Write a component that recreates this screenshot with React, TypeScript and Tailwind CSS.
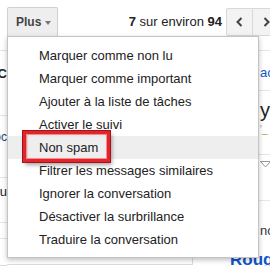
const menuItems = [
  "Marquer comme non lu",
  "Marquer comme important",
  "Ajouter à la liste de tâches",
  "Activer le suivi",
  "Non spam",
  "Filtrer les messages similaires",
  "Ignorer la conversation",
  "Désactiver la surbrillance",
  "Traduire la conversation",
];

function Chevron({ dir }: { dir: "left" | "right" }) {
  return (
    <svg width="7" height="10" viewBox="0 0 7 10" fill="none">
      <polyline
        points={dir === "left" ? "5.5,1 1.5,5 5.5,9" : "1.5,1 5.5,5 1.5,9"}
        stroke="#444"
        strokeWidth="2"
      />
    </svg>
  );
}

export default function App() {
  return (
    <div className="relative w-[270px] h-[266px] overflow-hidden bg-white font-['Liberation_Sans',Arial,sans-serif] text-[13px] text-[#222]">
      {/* Toolbar */}
      <div className="flex items-start h-[36px] pt-[7px] pl-[7px]">
        <button className="flex items-center h-[29px] w-[51px] pl-[8px] gap-[4px] rounded-t-[2px] border border-b-0 border-[#d0d0d0] bg-[#eeeeee] text-[12px] font-bold text-[#444]">
          Plus
          <span className="w-0 h-0 border-x-[3px] border-x-transparent border-t-[4px] border-t-[#777] mt-[1px]" />
        </button>
        <div className="ml-auto mr-[4px] h-[29px] flex items-center whitespace-nowrap">
          <b>7</b>&nbsp;sur environ&nbsp;<b>94</b>
        </div>
        <div className="flex mr-[-10px] mt-[1px]">
          <button className="w-[27px] h-[28px] flex items-center justify-center border border-[#d8d8d8] rounded-l-[2px] bg-[#f3f3f3]">
            <Chevron dir="left" />
          </button>
          <button className="w-[27px] h-[28px] flex items-center justify-center border border-l-0 border-[#d8d8d8] bg-[#f3f3f3]">
            <Chevron dir="right" />
          </button>
        </div>
      </div>

      {/* Page behind the menu */}
      <div className="flex h-[230px]">
        <div className="w-[7px] shrink-0 flex flex-col overflow-hidden">
          <div className="h-[15px] shrink-0 border-b border-[#e5e5e5]" />
          <div className="h-[65px] shrink-0 border-b border-[#e5e5e5] pt-[15px] leading-[16px] font-bold flex justify-end whitespace-nowrap">
            C
          </div>
          <div className="h-[62px] shrink-0 border-b border-[#e5e5e5] pt-[13px] leading-[16px] text-[12px] text-[#2a3f6a] flex justify-end whitespace-nowrap">
            oc
          </div>
          <div className="h-[45px] shrink-0 border-b border-[#e5e5e5] pt-[6px] leading-[16px] flex justify-end whitespace-nowrap">
            u
          </div>
          <div className="h-[16px] shrink-0 border-b border-[#e5e5e5]" />
          <div className="h-[27px] shrink-0 border-b border-[#dcdcdc]" />
        </div>

        <div className="flex-1 flex flex-col pt-[221px]">
          <div className="h-[8px] w-[186px] border-r border-b border-[#dcdcdc]" />
        </div>

        <div className="w-[11px] shrink-0 flex flex-col pl-[1px]">
          <div className="h-[15px] shrink-0 border-b border-[#e5e5e5] -ml-[1px]" />
          <div className="h-[40px] shrink-0 border-b border-[#e5e5e5] pt-[14px] leading-[16px] text-[#1155cc] whitespace-nowrap overflow-hidden -ml-[1px] pl-[1px]">
            ac
          </div>
          <div className="h-[64px] shrink-0 border-b border-[#e5e5e5] overflow-hidden -ml-[1px] pl-[1px]">
            <div className="pt-[8px] leading-[22px] text-[20px] text-[#222]">y</div>
            <div className="mt-[4px] text-[10px] leading-[10px] text-[#b59a4a] whitespace-nowrap">'_</div>
          </div>
          <div className="h-[46px] shrink-0 border-b border-[#e5e5e5] pt-[6px] -ml-[1px] pl-[1px]">
            <svg width="11" height="7" viewBox="0 0 11 7">
              <polygon points="0.5,0.5 10.5,0.5 5.5,6" fill="white" stroke="#999" />
            </svg>
          </div>
          <div className="h-[44px] shrink-0 pt-[22px] leading-[16px] text-[#333] whitespace-nowrap overflow-hidden">
            nc
          </div>
          <div className="mt-[5px] -ml-[30px] text-[17px] leading-[20px] font-bold text-[#1155cc] whitespace-nowrap">
            Rouge
          </div>
        </div>
      </div>

      {/* Dropdown menu */}
      <div className="absolute left-[7px] top-[36px] w-[252px] h-[222px] bg-white border border-[#c4c4c4] shadow-[0_2px_5px_rgba(0,0,0,0.25)] pt-[7px]">
        {menuItems.map((label, i) => (
          <div
            key={label}
            className={
              i === 4
                ? "relative h-[23px] flex items-center pl-[31px] whitespace-nowrap bg-[#eeeeee]"
                : "relative h-[23px] flex items-center pl-[31px] whitespace-nowrap"
            }
          >
            {label}
            {i === 4 && (
              <div className="absolute left-[15px] top-[-5px] w-[87px] h-[31px] border-[3px] border-[#e2252b] shadow-[0_0_0_1px_#a3141a,inset_0_0_0_1px_#f88a8d,inset_1px_1px_2px_rgba(0,0,0,0.35),2px_3px_4px_rgba(0,0,0,0.35)]" />
            )}
          </div>
        ))}
      </div>
    </div>
  );
}
